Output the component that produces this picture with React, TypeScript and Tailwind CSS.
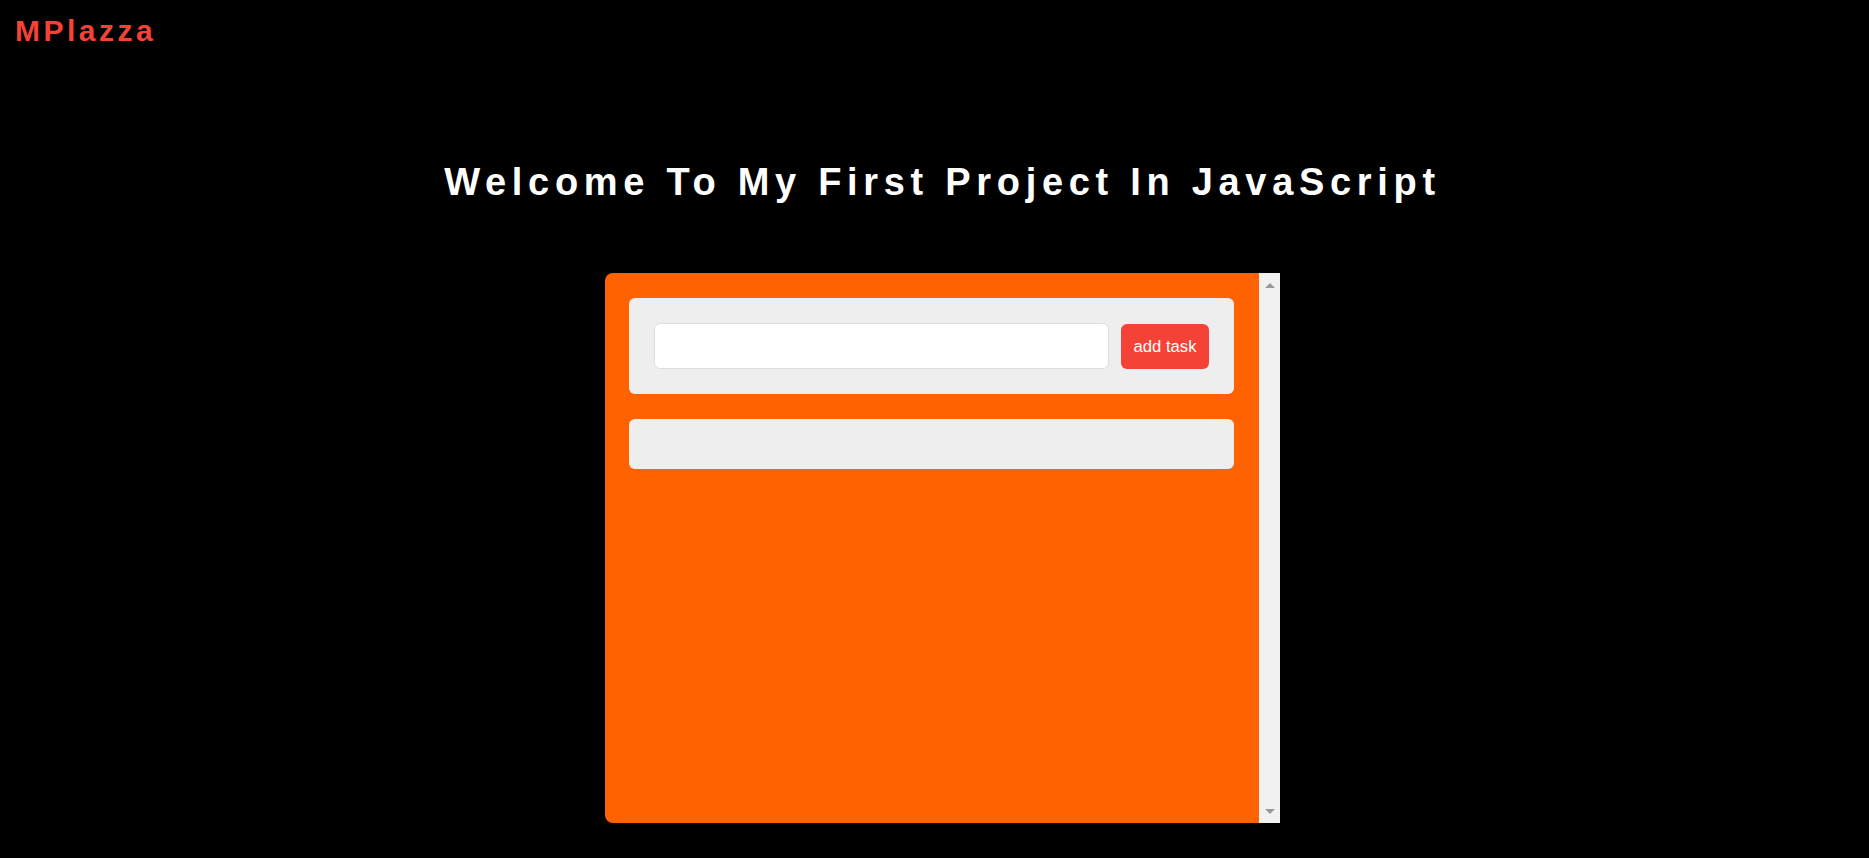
export default function App() {
  return (
    <div className="min-h-[858px] bg-black font-['Liberation_Sans',Arial,sans-serif]">
      {/* Brand */}
      <div className="pt-[8px] pl-[15px] text-[30px] font-bold leading-normal tracking-[3.5px] text-[#f44336]">
        MPlazza
      </div>

      <div className="flex flex-col items-center pl-[16px]">
        <h1 className="mt-[101px] text-[38px] font-bold leading-normal tracking-[5.7px] text-white">
          Welcome To My First Project In JavaScript
        </h1>

        {/* Task box */}
        <div className="mt-[62px] flex h-[550px] w-[675px] overflow-hidden rounded-l-[8px] bg-[#ff6200]">
          <div className="flex flex-1 flex-col gap-[25px] pt-[25px] pl-[24px] pr-[25px]">
            <div className="flex items-center gap-[12px] rounded-[6px] bg-[#eeeeee] p-[25px]">
              <input
                type="text"
                className="h-[46px] flex-1 rounded-[6px] border border-[#dddddd] bg-white px-3 text-[16px] outline-none"
              />
              <button className="h-[45px] w-[88px] rounded-[6px] bg-[#f44336] text-[16.67px] text-white">
                add task
              </button>
            </div>
            <div className="h-[50px] rounded-[6px] bg-[#eeeeee]" />
          </div>

          {/* Scrollbar */}
          <div className="flex w-[21px] flex-col items-center justify-between bg-[#f1f1f1] pt-[10px] pb-[9px]">
            <svg width="10" height="5" viewBox="0 0 10 5">
              <polygon points="5,0 10,5 0,5" fill="#999999" />
            </svg>
            <svg width="10" height="5" viewBox="0 0 10 5">
              <polygon points="0,0 10,0 5,5" fill="#999999" />
            </svg>
          </div>
        </div>
      </div>
    </div>
  );
}
